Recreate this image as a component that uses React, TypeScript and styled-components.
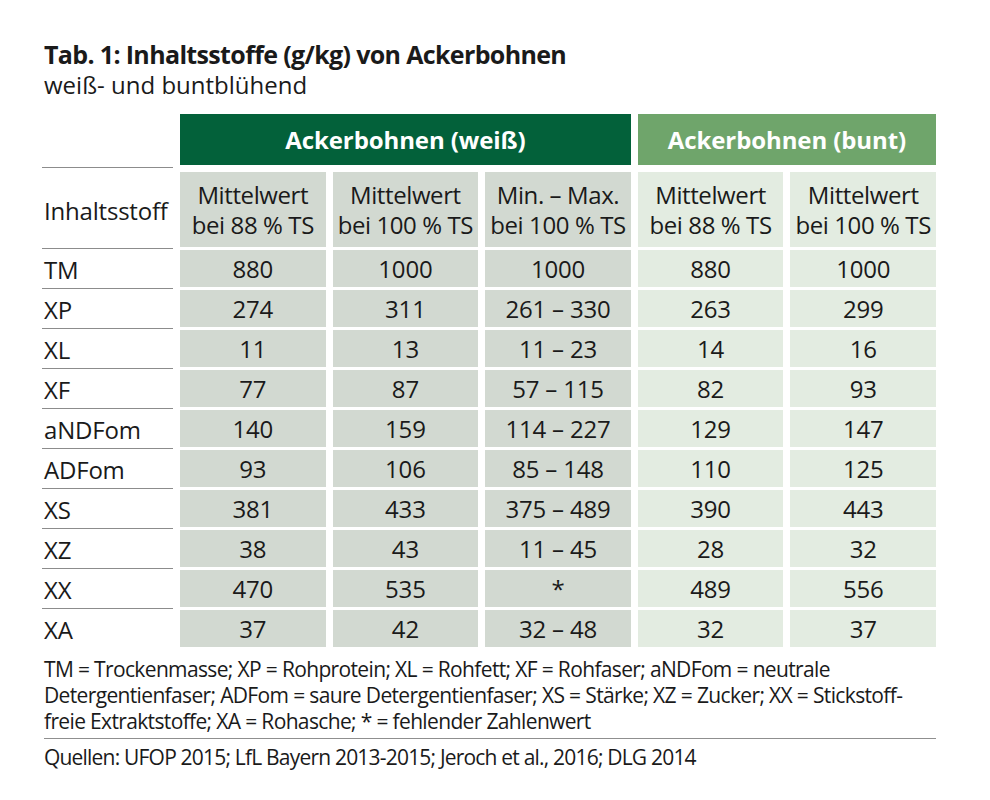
import React from "react";
import styled, { createGlobalStyle } from "styled-components";

const Global = createGlobalStyle`
  html, body { margin: 0; padding: 0; background: #ffffff; }
  body { font-family: "Open Sans", "Noto Sans", sans-serif; color: #1a1a1a; }
`;

const Page = styled.div`
  width: 990px;
  height: 800px;
  box-sizing: border-box;
  padding: 38px 54px 0 42px;
`;

const Title = styled.h1`
  margin: 0 0 0 2px;
  font-size: 25px;
  line-height: 32px;
  font-weight: 700;
  letter-spacing: -0.65px;
`;

const Subtitle = styled.div`
  margin: 0 0 0 2px;
  font-size: 24px;
  line-height: 30px;
  letter-spacing: 0px;
`;

const Grid = styled.div`
  margin-top: 14px;
  display: grid;
  grid-template-columns: 131px repeat(5, 1fr);
  column-gap: 7px;
  row-gap: 3px;
`;

const Corner = styled.div`
  height: 54px;
  border-bottom: 1px solid #8c8c8c;
  box-sizing: border-box;
`;

const GroupHead = styled.div<{ $tone: "dark" | "light"; $span: number }>`
  grid-column: span ${(p) => p.$span};
  height: 51px;
  margin-bottom: 4px;
  background: ${(p) => (p.$tone === "dark" ? "#03613a" : "#6fa56b")};
  color: #ffffff;
  font-weight: 700;
  font-size: 24px;
  letter-spacing: -0.1px;
  display: flex;
  align-items: center;
  justify-content: center;
`;

const Label = styled.div<{ $line: boolean }>`
  display: flex;
  align-items: center;
  padding-left: 2px;
  font-size: 24px;
  letter-spacing: -0.2px;
  white-space: nowrap;
  margin-bottom: -2px;
  border-bottom: 1px solid ${(p) => (p.$line ? "#8c8c8c" : "transparent")};
`;

const Cell = styled.div<{ $tone: "gray" | "green" }>`
  background: ${(p) => (p.$tone === "gray" ? "#d2d9d1" : "#e3ece1")};
  height: 37px;
  display: flex;
  align-items: center;
  justify-content: center;
  font-size: 24px;
  letter-spacing: -0.2px;
`;

const SubHead = styled(Cell)`
  height: 75px;
  flex-direction: column;
  line-height: 30px;
  text-align: center;
  white-space: nowrap;
  letter-spacing: -0.4px;
`;

const Notes = styled.div`
  margin: 9px 0 0 2px;
  font-size: 21px;
  line-height: 26px;
  letter-spacing: -0.65px;
  padding-bottom: 4px;
  border-bottom: 1.5px solid #8f8f8f;
  white-space: nowrap;
`;

const Sources = styled.div`
  margin: 5px 0 0 2px;
  font-size: 21px;
  line-height: 26px;
  letter-spacing: -0.8px;
  white-space: nowrap;
`;

type Tone = "gray" | "green";
const tones: Tone[] = ["gray", "gray", "gray", "green", "green"];

const subHeads: [string, string][] = [
  ["Mittelwert", "bei 88 % TS"],
  ["Mittelwert", "bei 100 % TS"],
  ["Min. – Max.", "bei 100 % TS"],
  ["Mittelwert", "bei 88 % TS"],
  ["Mittelwert", "bei 100 % TS"],
];

const rows: [string, string, string, string, string, string][] = [
  ["TM", "880", "1000", "1000", "880", "1000"],
  ["XP", "274", "311", "261 – 330", "263", "299"],
  ["XL", "11", "13", "11 – 23", "14", "16"],
  ["XF", "77", "87", "57 – 115", "82", "93"],
  ["aNDFom", "140", "159", "114 – 227", "129", "147"],
  ["ADFom", "93", "106", "85 – 148", "110", "125"],
  ["XS", "381", "433", "375 – 489", "390", "443"],
  ["XZ", "38", "43", "11 – 45", "28", "32"],
  ["XX", "470", "535", "*", "489", "556"],
  ["XA", "37", "42", "32 – 48", "32", "37"],
];

export default function App() {
  return (
    <Page>
      <Global />
      <Title>Tab. 1: Inhaltsstoffe (g/kg) von Ackerbohnen</Title>
      <Subtitle>weiß- und buntblühend</Subtitle>
      <Grid>
        <Corner />
        <GroupHead $tone="dark" $span={3}>Ackerbohnen (weiß)</GroupHead>
        <GroupHead $tone="light" $span={2}>Ackerbohnen (bunt)</GroupHead>

        <Label $line={true}>Inhaltsstoff</Label>
        {subHeads.map((s, i) => (
          <SubHead key={i} $tone={tones[i]}>
            <span>{s[0]}</span>
            <span>{s[1]}</span>
          </SubHead>
        ))}

        {rows.map((r, ri) => (
          <React.Fragment key={r[0]}>
            <Label $line={ri < rows.length - 1}>{r[0]}</Label>
            {r.slice(1).map((v, ci) => (
              <Cell key={ci} $tone={tones[ci]}>{v}</Cell>
            ))}
          </React.Fragment>
        ))}
      </Grid>
      <Notes>
        TM = Trockenmasse; XP = Rohprotein; XL = Rohfett; XF = Rohfaser; aNDFom = neutrale
        <br />
        Detergentienfaser; ADFom = saure Detergentienfaser; XS = Stärke; XZ = Zucker; XX = Stickstoff-
        <br />
        freie Extraktstoffe; XA = Rohasche; * = fehlender Zahlenwert
      </Notes>
      <Sources>Quellen: UFOP 2015; LfL Bayern 2013-2015; Jeroch et al., 2016; DLG 2014</Sources>
    </Page>
  );
}
